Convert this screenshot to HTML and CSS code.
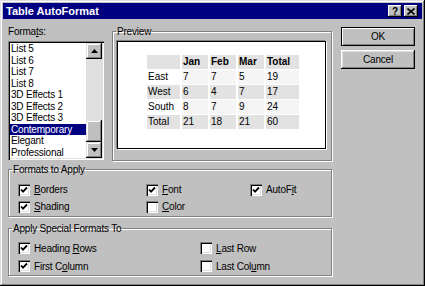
FILE: index.html
```html
<!DOCTYPE html>
<html lang="en">
<head>
  <meta charset="UTF-8" />
  <title>Table AutoFormat</title>
  <link rel="stylesheet" href="styles.css">
</head>
<body>
  <div class="dialog">
    <div class="titlebar">
      <span class="title">Table AutoFormat</span>
      <div class="title-btns">
        <span class="tbtn help">?</span>
        <span class="tbtn close">
          <svg width="8" height="7" viewBox="0 0 8 7"><path d="M0.5 0.5 L7.5 6.5 M7.5 0.5 L0.5 6.5" stroke="#000" stroke-width="1.6" /></svg>
        </span>
      </div>
    </div>

    <div class="content">
      <div class="main">
        <div class="top-row">
          <div class="formats">
            <div class="label">Forma<u>t</u>s:</div>
            <div class="listbox">
              <ul class="items">
                <li>List 5</li>
                <li>List 6</li>
                <li>List 7</li>
                <li>List 8</li>
                <li>3D Effects 1</li>
                <li>3D Effects 2</li>
                <li>3D Effects 3</li>
                <li class="selected">Contemporary</li>
                <li>Elegant</li>
                <li>Professional</li>
              </ul>
              <div class="scrollbar">
                <div class="sb-btn">
                  <svg width="7" height="4" viewBox="0 0 7 4"><path d="M3.5 0 L7 4 L0 4 Z" fill="#000" /></svg>
                </div>
                <div class="sb-track"><div class="sb-thumb"></div></div>
                <div class="sb-btn">
                  <svg width="7" height="4" viewBox="0 0 7 4"><path d="M0 0 L7 0 L3.5 4 Z" fill="#000" /></svg>
                </div>
              </div>
            </div>
          </div>

          <fieldset class="group preview">
            <legend>Preview</legend>
            <div class="preview-box">
              <div class="sample">
                <div class="cell head"></div>
                <div class="cell head">Jan</div>
                <div class="cell head">Feb</div>
                <div class="cell head">Mar</div>
                <div class="cell head">Total</div>

                <div class="cell">East</div>
                <div class="cell light">7</div>
                <div class="cell light">7</div>
                <div class="cell light">5</div>
                <div class="cell light">19</div>

                <div class="cell dark">West</div>
                <div class="cell dark">6</div>
                <div class="cell dark">4</div>
                <div class="cell dark">7</div>
                <div class="cell dark">17</div>

                <div class="cell">South</div>
                <div class="cell light">8</div>
                <div class="cell light">7</div>
                <div class="cell light">9</div>
                <div class="cell light">24</div>

                <div class="cell dark">Total</div>
                <div class="cell dark">21</div>
                <div class="cell dark">18</div>
                <div class="cell dark">21</div>
                <div class="cell dark">60</div>
              </div>
            </div>
          </fieldset>
        </div>

        <fieldset class="group apply">
          <legend>Formats to Apply</legend>
          <div class="checks">
            <label class="check"><span class="box"><svg width="8" height="8" viewBox="0 0 8 8"><path d="M1 3.5 L3 5.6 L7 1.5" fill="none" stroke="#000" stroke-width="1.8" /></svg></span><span><u>B</u>orders</span></label>
            <label class="check"><span class="box"><svg width="8" height="8" viewBox="0 0 8 8"><path d="M1 3.5 L3 5.6 L7 1.5" fill="none" stroke="#000" stroke-width="1.8" /></svg></span><span><u>F</u>ont</span></label>
            <label class="check"><span class="box"><svg width="8" height="8" viewBox="0 0 8 8"><path d="M1 3.5 L3 5.6 L7 1.5" fill="none" stroke="#000" stroke-width="1.8" /></svg></span><span>AutoF<u>i</u>t</span></label>
            <label class="check"><span class="box"><svg width="8" height="8" viewBox="0 0 8 8"><path d="M1 3.5 L3 5.6 L7 1.5" fill="none" stroke="#000" stroke-width="1.8" /></svg></span><span><u>S</u>hading</span></label>
            <label class="check"><span class="box"></span><span><u>C</u>olor</span></label>
          </div>
        </fieldset>

        <fieldset class="group special">
          <legend>Apply Special Formats To</legend>
          <div class="checks">
            <label class="check"><span class="box"><svg width="8" height="8" viewBox="0 0 8 8"><path d="M1 3.5 L3 5.6 L7 1.5" fill="none" stroke="#000" stroke-width="1.8" /></svg></span><span>Heading <u>R</u>ows</span></label>
            <label class="check"><span class="box"></span><span><u>L</u>ast Row</span></label>
            <label class="check"><span class="box"><svg width="8" height="8" viewBox="0 0 8 8"><path d="M1 3.5 L3 5.6 L7 1.5" fill="none" stroke="#000" stroke-width="1.8" /></svg></span><span>First C<u>o</u>lumn</span></label>
            <label class="check"><span class="box"></span><span>Last Col<u>u</u>mn</span></label>
          </div>
        </fieldset>
      </div>

      <div class="buttons">
        <button class="btn default">OK</button>
        <button class="btn">Cancel</button>
      </div>
    </div>
  </div>
</body>
</html>
```

FILE: styles.css
```css
body {
  margin: 0;
  font-family: 'Liberation Sans', Arial, sans-serif;
  font-size: 10px;
  letter-spacing: -0.2px;
  color: #000;
  background: #c0c0c0;
}

.dialog {
  width: 425px;
  height: 286px;
  box-sizing: border-box;
  padding: 3px;
  background: #c0c0c0;
  box-shadow: inset -1px -1px #000, inset 1px 1px #dfdfdf,
              inset -2px -2px #808080, inset 2px 2px #fff;
}

/* title bar */
.titlebar {
  height: 16px;
  background: #000080;
  color: #fff;
  display: flex;
  align-items: center;
  justify-content: space-between;
  padding: 0 4px 0 3px;
}

.title {
  font-weight: bold;
  font-size: 11px;
  letter-spacing: 0;
}

.title-btns {
  display: flex;
  gap: 2px;
}

.tbtn {
  width: 14px;
  height: 12px;
  box-sizing: border-box;
  background: #c0c0c0;
  color: #000;
  display: flex;
  align-items: center;
  justify-content: center;
  font-weight: bold;
  font-size: 10px;
  box-shadow: inset -1px -1px #000, inset 1px 1px #fff, inset -2px -2px #808080;
}

/* layout */
.content {
  display: flex;
  padding: 6px 0 0 5px;
}

.main {
  width: 324px;
}

.top-row {
  display: flex;
}

.formats {
  width: 96px;
}

.label {
  line-height: 13px;
  margin-bottom: 3px;
}

.listbox {
  height: 119px;
  box-sizing: border-box;
  padding: 2px;
  background: #fff;
  display: flex;
  box-shadow: inset 1px 1px #808080, inset 2px 2px #000,
              inset -1px -1px #fff, inset -2px -2px #dfdfdf;
}

.items {
  list-style: none;
  margin: 0;
  padding: 0;
  flex: 1;
}

.items li {
  line-height: 11.5px;
  padding-left: 1px;
  white-space: nowrap;
}

.items li.selected {
  background: #000080;
  color: #fff;
}

.scrollbar {
  width: 16px;
  display: flex;
  flex-direction: column;
}

.sb-btn {
  height: 16px;
  background: #c0c0c0;
  display: flex;
  align-items: center;
  justify-content: center;
  box-shadow: inset -1px -1px #000, inset 1px 1px #dfdfdf,
              inset -2px -2px #808080, inset 2px 2px #fff;
}

.sb-track {
  flex: 1;
  background: #e0e0e0;
  display: flex;
  flex-direction: column;
}

.sb-thumb {
  height: 22px;
  margin-top: auto;
  background: #c0c0c0;
  box-shadow: inset -1px -1px #000, inset 1px 1px #dfdfdf,
              inset -2px -2px #808080, inset 2px 2px #fff;
}

/* group boxes */
.group {
  margin: 0;
  box-sizing: border-box;
  border: 1px solid #808080;
  box-shadow: inset 1px 1px #fff, 1px 1px #fff;
  min-inline-size: 0;
}

.group legend {
  padding: 0 1px;
  line-height: 13px;
}

.preview {
  width: 220px;
  height: 136px;
  margin-left: 8px;
  padding: 3px 5px 0 4px;
}

.preview legend {
  margin-left: -1px;
}

.preview-box {
  height: 108px;
  box-sizing: border-box;
  background: #fff;
  border: 1px solid #000;
  box-shadow: -1px -1px 0 #808080, 1px 1px 0 #fff;
  padding: 13px 0 0 29px;
}

.sample {
  display: grid;
  grid-template-columns: 33px 26px 26px 26px 33px;
  grid-auto-rows: 14px;
  column-gap: 2px;
  row-gap: 1px;
}

.cell {
  line-height: 14px;
  padding-left: 1px;
  letter-spacing: 0;
}

.cell.head {
  background: #e2e2e2;
  font-weight: bold;
}

.cell.light {
  background: #f5f5f5;
}

.cell.dark {
  background: #e2e2e2;
}

.apply {
  margin-top: 2px;
  padding: 5px 0 1px 9px;
}

.apply legend,
.special legend {
  margin-left: -6px;
}

.apply .checks {
  display: grid;
  grid-template-columns: 128px 104px 1fr;
  grid-auto-rows: 17px;
}

.special {
  margin-top: 5px;
  padding: 4px 0 0 9px;
}

.special .checks {
  display: grid;
  grid-template-columns: 182px 1fr;
  grid-auto-rows: 18px;
}

.check {
  display: flex;
  align-items: center;
  gap: 4px;
  white-space: nowrap;
}

.box {
  width: 12px;
  height: 12px;
  box-sizing: border-box;
  padding: 2px;
  background: #fff;
  display: flex;
  box-shadow: inset 1px 1px #808080, inset 2px 2px #000,
              inset -1px -1px #fff, inset -2px -2px #dfdfdf;
}

/* buttons */
.buttons {
  display: flex;
  flex-direction: column;
  gap: 4px;
  margin-left: 9px;
  padding-top: 2px;
}

.btn {
  width: 74px;
  height: 19px;
  border: none;
  padding: 0;
  background: #c0c0c0;
  font-family: inherit;
  font-size: 10px;
  letter-spacing: -0.2px;
  color: #000;
  box-shadow: inset -1px -1px #000, inset 1px 1px #fff,
              inset -2px -2px #808080, inset 2px 2px #dfdfdf;
}

.btn.default {
  box-shadow: inset 0 0 0 1px #000, inset 2px 2px #fff,
              inset -2px -2px #808080;
}
```
